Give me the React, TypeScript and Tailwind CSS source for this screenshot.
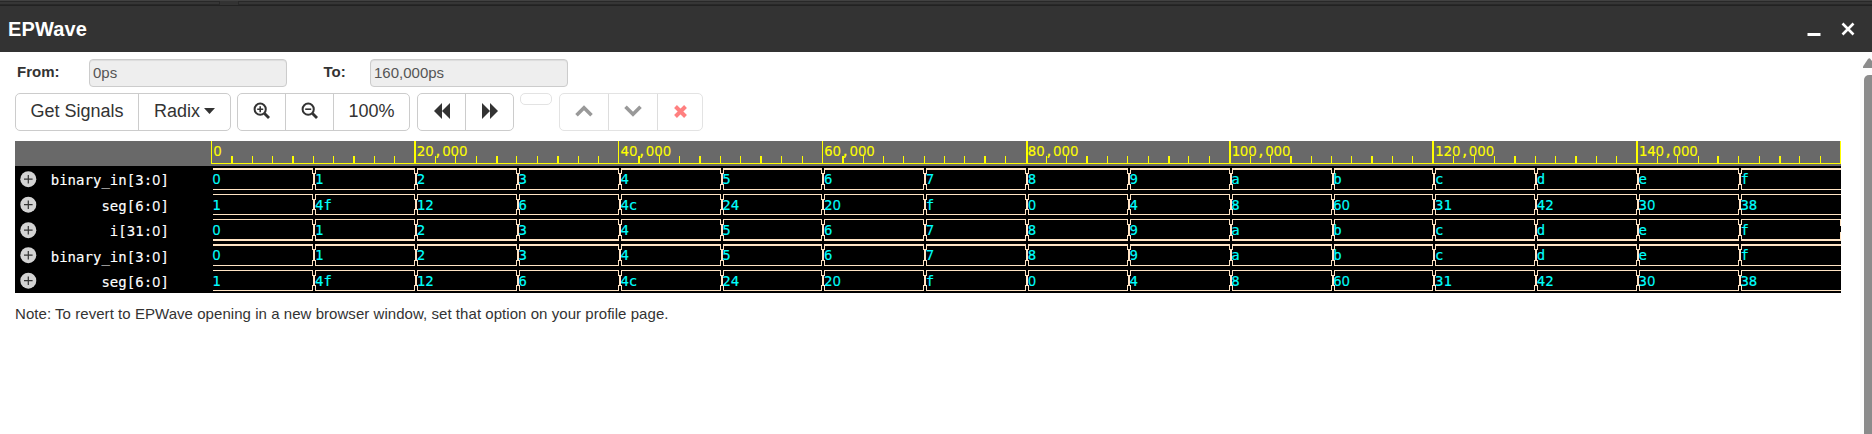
import React from 'react';

const STEP = 101.82;
const X0 = 196.5;
const CELL = 8.45;
const COUNT = ['0', '1', '2', '3', '4', '5', '6', '7', '8', '9', 'a', 'b', 'c', 'd', 'e', 'f'];
const SEG = ['1', '4f', '12', '6', '4c', '24', '20', 'f', '0', '4', '8', '60', '31', '42', '30', '38'];
const WIDE_TICKS = [1, 4, 7, 10, 14, 17, 21, 24, 27, 31, 38, 40, 43, 47, 50, 53, 57, 60, 64, 67, 70, 74, 77];

const ROWS = [
  { name: 'binary_in[3:0]', values: COUNT, top: 27, topH: 2, bottom: 48, bottomH: 1, base: 43, label: 44 },
  { name: 'seg[6:0]', values: SEG, top: 53, topH: 1, bottom: 73, bottomH: 1, base: 69, label: 70 },
  { name: 'i[31:0]', values: COUNT, top: 78, topH: 1, bottom: 98, bottomH: 2, base: 94, label: 95 },
  { name: 'binary_in[3:0]', values: COUNT, top: 103, topH: 2, bottom: 124, bottomH: 1, base: 119, label: 121 },
  { name: 'seg[6:0]', values: SEG, top: 129, topH: 1, bottom: 149, bottomH: 1, base: 145, label: 146 },
];

type Row = (typeof ROWS)[number];

// Fixed-pitch text whose zero has no dot: zeros come from the proportional face.
function Mono({ x, y, fill, text }: { x: number; y: number; fill: string; text: string }) {
  return (
    <text y={y} fill={fill} stroke={fill} strokeWidth="0.15" textAnchor="middle">
      {text.split('').map((c, i) => (
        <tspan
          key={i}
          x={x + (i + 0.5) * CELL}
          className={c === '0' ? "font-['Noto_Sans',sans-serif]" : undefined}
        >
          {c}
        </tspan>
      ))}
    </text>
  );
}

function Ruler() {
  return (
    <g>
      <rect x="0" y="0" width="1826" height="25" fill="#696969" />
      {Array.from({ length: 81 }, (_, i) => {
        const x = X0 + (i * STEP) / 5;
        const major = i % 10 === 0;
        const wide = WIDE_TICKS.includes(i);
        return (
          <rect
            key={i}
            x={i === 40 ? 1011 : i === 80 ? 1825 : wide ? Math.round(x) - 1 : Math.floor(x)}
            y={major ? 0 : 15}
            width={wide ? 2 : 1}
            height={major ? 22 : 7}
            fill="#ff0"
          />
        );
      })}
      <rect x="196" y="22" width="1630" height="1" fill="#ff0" />
      {Array.from({ length: 8 }, (_, i) => (
        <Mono key={i} x={X0 + i * 2 * STEP + 1.7} y={15} fill="#ff0" text={(i * 20000).toLocaleString('en-US')} />
      ))}
    </g>
  );
}

function Wave({ row }: { row: Row }) {
  const { top, bottom, topH, bottomH } = row;
  const end = bottom + bottomH;
  const mid = (top + end) / 2 + 0.2;
  return (
    <g>
      <circle cx="13.3" cy={mid} r="8" fill="#d3d3d3" />
      <path d={`M9 ${mid}h8.6M13.3 ${mid - 4.3}v8.6`} stroke="#333" strokeWidth="1.2" />
      <Mono x={154 - row.name.length * CELL} y={row.label} fill="#fff" text={row.name} />
      <g shapeRendering="crispEdges" fill="bisque">
        <rect x="198" y={top} width="1628" height={topH} />
        <rect x="198" y={bottom} width="1628" height={bottomH} />
        {row.values.slice(1).map((_, i) => {
          const x = Math.round(X0 + (i + 1) * STEP);
          return (
            <g key={i}>
              <rect x={x} y={top} width="2" height={end - top} fill="#000" />
              <rect x={x - 1} y={top} width="1" height="6" />
              <rect x={x + 2} y={top} width="1" height="6" />
              <rect x={x} y={top + 5} width="2" height={end - top - 10} />
              <rect x={x - 1} y={end - 6} width="1" height="6" />
              <rect x={x + 2} y={end - 6} width="1" height="6" />
            </g>
          );
        })}
      </g>
      {row.values.map((v, i) => (
        <Mono key={i} x={X0 + i * STEP + (i ? 1.6 : 0.8)} y={row.base} fill="#0ff" text={v} />
      ))}
    </g>
  );
}

function Field({ value }: { value: string }) {
  return (
    <div className="h-7 w-[198px] rounded-[4px] border border-[#ccc] bg-[#eee] px-[3px] text-[15px] leading-[25px] text-[#555] shadow-[inset_0_1px_1px_rgba(0,0,0,0.075)]">
      {value}
    </div>
  );
}

function Group({ children, faded }: { children: React.ReactNode; faded?: boolean }) {
  return (
    <div
      className={
        faded
          ? 'ml-px flex h-[38px] divide-x divide-[#ddd] rounded-[5px] border border-[#e3e3e3]'
          : 'flex h-[38px] divide-x divide-[#ccc] rounded-[5px] border border-[#ccc]'
      }
    >
      {children}
    </div>
  );
}

function Cell({ className, children }: { className: string; children: React.ReactNode }) {
  return <button className={'flex items-center justify-center pb-0.5 ' + className}>{children}</button>;
}

function Magnifier({ plus }: { plus?: boolean }) {
  return (
    <svg width="18" height="18" viewBox="0 0 18 18" fill="none" stroke="#333">
      <circle cx="7.2" cy="7.2" r="5.6" strokeWidth="2" />
      <path d="M11.5 11.5L16 16" strokeWidth="2.8" />
      <path d={plus ? 'M4.2 7.2h6M7.2 4.2v6' : 'M4.2 7.2h6'} strokeWidth="1.6" />
    </svg>
  );
}

export default function App() {
  return (
    <div className="flex h-[434px] w-full flex-col overflow-hidden bg-white font-['Liberation_Sans',Arial,sans-serif] text-[#333]">
      <div className="flex h-1.5 shrink-0 flex-col bg-[#333]">
        <div className="h-px bg-[#414141]" />
        <div className="flex h-[5px] justify-between border-b border-[#222]">
          <div className="w-[220px] border-y border-r border-[#282828] bg-[#363636]" />
          <div className="ml-[18px] grow border-y border-l border-[#282828] bg-[#363636]" />
        </div>
      </div>
      <header className="flex h-[46px] shrink-0 items-center justify-between bg-[#333] pr-[17px] pl-2 text-white">
        <h1 className="text-[20px] font-bold tracking-[0.15px]">EPWave</h1>
        <div className="flex items-center gap-[20px]">
          <svg width="14" height="14" viewBox="0 0 14 14">
            <rect x="0.5" y="11" width="13" height="3" fill="#fff" />
          </svg>
          <svg width="14" height="14" viewBox="0 0 14 14" stroke="#fff" strokeWidth="2.6">
            <path d="M1.5 1.5l11 11M12.5 1.5l-11 11" />
          </svg>
        </div>
      </header>
      <div className="flex min-h-0 grow">
        <main className="flex grow flex-col pt-[7px] pl-[15px]">
          <div className="flex h-7 text-[15px]">
            <span className="w-[74px] pl-0.5 leading-[26px] font-bold">From:</span>
            <Field value="0ps" />
            <span className="ml-[36px] w-[47px] pl-[0.5px] leading-[26px] font-bold">To:</span>
            <Field value="160,000ps" />
          </div>
          <div className="mt-1.5 flex gap-[6px] text-[18px]">
            <Group>
              <Cell className="w-[123px]">Get Signals</Cell>
              <Cell className="w-[91px] gap-1">
                Radix
                <svg width="11" height="6" viewBox="0 0 11 6">
                  <path d="M0 0h11L5.5 6z" fill="#333" />
                </svg>
              </Cell>
            </Group>
            <Group>
              <Cell className="w-[48px]">
                <Magnifier plus />
              </Cell>
              <Cell className="w-[48px]">
                <Magnifier />
              </Cell>
              <Cell className="w-[75px]">100%</Cell>
            </Group>
            <div className="ml-px flex">
              <Group>
                <Cell className="w-[48px]">
                  <svg width="16" height="16" viewBox="0 0 16 16" fill="#333">
                    <path d="M8 0v16L0 8zM16 0v16L8 8z" />
                  </svg>
                </Cell>
                <Cell className="w-[47px]">
                  <svg width="16" height="16" viewBox="0 0 16 16" fill="#333">
                    <path d="M0 0v16l8-8zM8 0v16l8-8z" />
                  </svg>
                </Cell>
              </Group>
            </div>
            <div className="h-3 w-8 rounded-[5px] border border-[#e3e3e3]" />
            <Group faded>
              <Cell className="w-[49px]">
                <svg width="18" height="12" viewBox="0 0 18 12" fill="none" stroke="#999" strokeWidth="3.6">
                  <path d="M1.5 10.3L9 2.8l7.5 7.5" />
                </svg>
              </Cell>
              <Cell className="w-[49px]">
                <svg width="18" height="12" viewBox="0 0 18 12" fill="none" stroke="#999" strokeWidth="3.6">
                  <path d="M1.5 1.7L9 9.2l7.5-7.5" />
                </svg>
              </Cell>
              <Cell className="w-[44px]">
                <svg width="13" height="13" viewBox="0 0 13 13" stroke="#ff8080" strokeWidth="4">
                  <path d="M1.5 1.5l10 10M11.5 1.5l-10 10" />
                </svg>
              </Cell>
            </Group>
          </div>
          <svg
            className="mt-[10px] block shrink-0 bg-black font-['DejaVu_Sans_Mono',monospace] text-[14px]"
            width="1826"
            height="152"
            viewBox="0 0 1826 152"
          >
            <Ruler />
            {ROWS.map((row, i) => (
              <Wave key={i} row={row} />
            ))}
            <path d="M1825.5 78v7M1825.5 91v8" stroke="bisque" />
          </svg>
          <p className="mt-[10px] text-[15px] leading-[22px] tracking-[0.05px]">
            Note: To revert to EPWave opening in a new browser window, set that option on your profile page.
          </p>
        </main>
        <div className="flex w-[12px] flex-col items-end overflow-hidden bg-[#fcfcfc] pt-[6px]">
          <svg className="h-[10px] w-[9px] shrink-0" viewBox="0 0 9 10">
            <path d="M0 10V8.5L5 1Q6 0 7 0.5L9 3V10z" fill="#8b8b8b" />
          </svg>
          <div className="mt-[7px] w-2 grow rounded-tl-[5px] bg-[#8b8b8b]" />
        </div>
      </div>
    </div>
  );
}
